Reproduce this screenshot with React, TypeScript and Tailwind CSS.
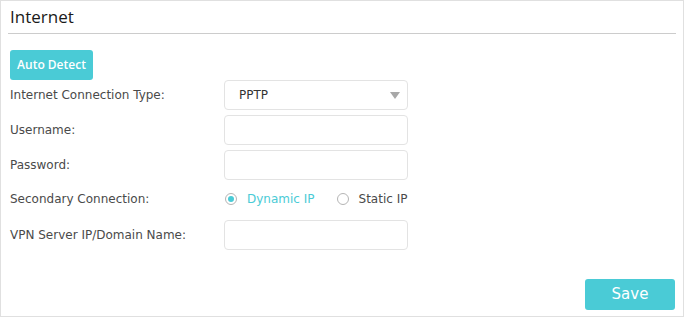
const labelFont = { fontFamily: '"DejaVu Sans", Verdana, sans-serif' }

const Field = ({ label, children }: { label: string; children: React.ReactNode }) => (
    <div className="flex items-center">
        <div className="w-[216px] pl-[2px] text-[12px] text-[#4a4a4a]">{label}</div>
        {children}
    </div>
)

const TextBox = () => (
    <input type="text" className="w-[184px] h-[30px] rounded-[4px] border border-[#e3e3e3] bg-white px-3 outline-none" />
)

const Radio = ({ checked, label }: { checked?: boolean; label: string }) => (
    <label className={`flex items-center gap-[10px] ${checked ? "text-[#4acbd6]" : "text-[#4a4a4a]"}`}>
        <span className="w-[12px] h-[12px] rounded-full border border-[#b5b5b5] flex items-center justify-center">
            {checked && <span className="w-[6px] h-[6px] rounded-full bg-[#4acbd6]" />}
        </span>
        {label}
    </label>
)

const App = () => {
    return (
        <div className="w-[684px] h-[317px] border border-[#e0e0e0] bg-white px-[7px] flex flex-col" style={labelFont}>
            <div className="h-[33px] border-b border-[#cccccc] flex items-end pb-[8px]">
                <h2 className="pl-[2px] text-[17px] text-[#1a1a1a] leading-none" style={{ fontFamily: '"Open Sans", sans-serif' }}>Internet</h2>
            </div>
            <div className="mt-[16px] pl-[2px]">
                <button
                    className="w-[83px] h-[30px] rounded-[3px] bg-[#4acbd6] text-white text-[12px] font-semibold"
                    style={{ fontFamily: '"Open Sans", sans-serif' }}
                >
                    Auto Detect
                </button>
            </div>
            <div className="flex flex-col">
                <Field label="Internet Connection Type:">
                    <div className="w-[184px] h-[30px] rounded-[4px] border border-[#e3e3e3] flex items-center justify-between pl-[14px] pr-[7px] text-[12px] text-[#333]">
                        <span>PPTP</span>
                        <svg width="10" height="7" viewBox="0 0 10 7"><path d="M0 0h10L5 7z" fill="#a8a8a8" /></svg>
                    </div>
                </Field>
                <div className="mt-[5px]">
                    <Field label="Username:"><TextBox /></Field>
                </div>
                <div className="mt-[5px]">
                    <Field label="Password:"><TextBox /></Field>
                </div>
                <div className="mt-[10px] h-[18px]">
                    <Field label="Secondary Connection:">
                        <div className="flex items-center gap-[22px] text-[12px] pl-[1px]">
                            <Radio checked label="Dynamic IP" />
                            <Radio label="Static IP" />
                        </div>
                    </Field>
                </div>
                <div className="mt-[12px]">
                    <Field label="VPN Server IP/Domain Name:"><TextBox /></Field>
                </div>
            </div>
            <div className="flex justify-end mt-[29px] pr-[1px]">
                <button className="w-[90px] h-[31px] rounded-[3px] bg-[#4acbd6] text-white text-[15px]">Save</button>
            </div>
        </div>
    )
}

export default App
